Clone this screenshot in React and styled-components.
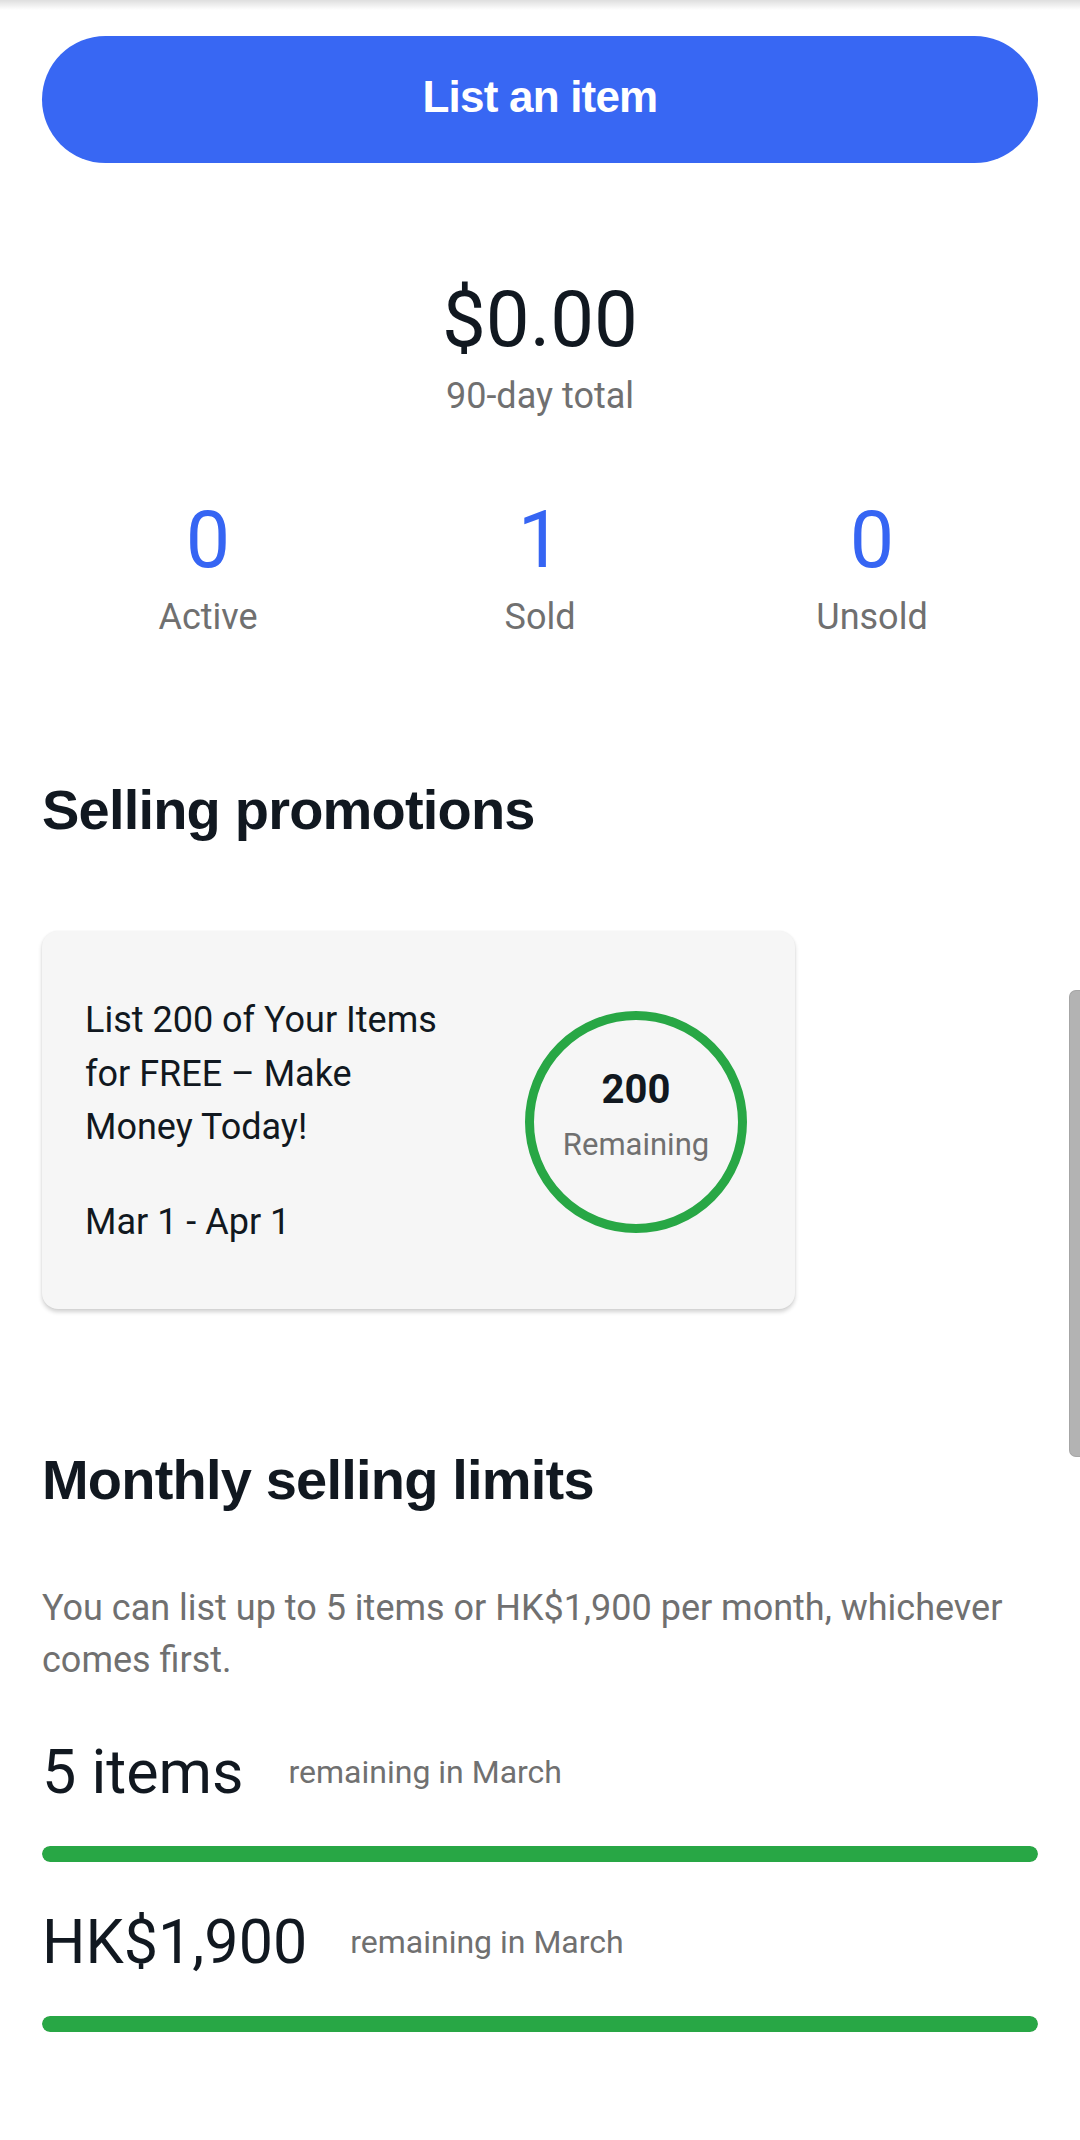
import React from "react";
import styled, { createGlobalStyle } from "styled-components";

const GlobalStyle = createGlobalStyle`
  html, body {
    margin: 0;
    padding: 0;
    background: #ffffff;
  }
  body {
    font-family: Roboto, "Noto Sans", Arial, sans-serif;
    color: #111820;
    -webkit-font-smoothing: antialiased;
  }
  * { box-sizing: border-box; }
`;

const Page = styled.div`
  position: relative;
  width: 1080px;
  min-height: 2140px;
  background: #ffffff;
  overflow: hidden;
`;

const TopShade = styled.div`
  height: 10px;
  background: linear-gradient(to bottom, rgba(0, 0, 0, 0.13), rgba(0, 0, 0, 0));
`;

const Content = styled.main`
  padding: 0 42px 80px;
  display: flex;
  flex-direction: column;
`;

const PrimaryButton = styled.button`
  margin-top: 26px;
  height: 127px;
  width: 100%;
  padding: 0 0 5px;
  border: none;
  border-radius: 64px;
  background: #3867f3;
  color: #ffffff;
  font-family: "Liberation Sans", Arial, sans-serif;
  font-weight: 700;
  font-size: 44px;
  letter-spacing: -0.8px;
  cursor: pointer;
`;

const Summary = styled.section`
  margin-top: 112px;
  display: flex;
  flex-direction: column;
  align-items: center;
`;

const Total = styled.div`
  font-size: 78px;
  line-height: 90px;
  color: #111820;
`;

const TotalLabel = styled.div`
  margin-top: 9px;
  font-size: 36px;
  line-height: 44px;
  color: #707070;
`;

const Stats = styled.section`
  margin-top: 77px;
  display: grid;
  grid-template-columns: repeat(3, 1fr);
`;

const Stat = styled.div`
  display: flex;
  flex-direction: column;
  align-items: center;
`;

const StatValue = styled.div`
  font-size: 79px;
  line-height: 90px;
  color: #3665f3;
`;

const StatLabel = styled.div`
  margin-top: 10px;
  font-size: 36px;
  line-height: 44px;
  color: #707070;
`;

const SectionTitle = styled.h2`
  margin: ${(p) => p.$top}px 0 0;
  font-family: "Liberation Sans", Arial, sans-serif;
  font-weight: 700;
  font-size: 56px;
  line-height: 64px;
  letter-spacing: -0.8px;
  color: #111820;
`;

const PromoCard = styled.div`
  margin-top: 89px;
  width: 753px;
  padding: 63px 48px 60px 43px;
  display: flex;
  align-items: center;
  justify-content: space-between;
  background: #f6f6f6;
  border-radius: 16px;
  box-shadow: 0 3px 4px rgba(0, 0, 0, 0.18), 0 0 2px rgba(0, 0, 0, 0.06);
`;

const PromoText = styled.div`
  width: 370px;
  display: flex;
  flex-direction: column;
`;

const PromoTitle = styled.div`
  font-size: 36px;
  line-height: 53.5px;
  color: #111820;
`;

const PromoDates = styled.div`
  margin-top: 41px;
  font-size: 36px;
  line-height: 53.5px;
  color: #111820;
`;

const Ring = styled.div`
  width: 222px;
  height: 222px;
  border-radius: 50%;
  border: 9px solid #28a745;
  display: flex;
  flex-direction: column;
  align-items: center;
  justify-content: center;
  padding-bottom: 10px;
`;

const RingCount = styled.div`
  font-size: 40px;
  line-height: 44px;
  font-weight: 700;
  color: #111820;
`;

const RingLabel = styled.div`
  margin-top: 13px;
  font-size: 31px;
  line-height: 40px;
  color: #707070;
`;

const Description = styled.p`
  margin: 70px 0 0;
  font-size: 36px;
  line-height: 52px;
  color: #707070;
`;

const LimitList = styled.div`
  margin-top: 50px;
  display: flex;
  flex-direction: column;
  gap: 44px;
`;

const LimitItem = styled.div`
  display: flex;
  flex-direction: column;
`;

const LimitRow = styled.div`
  display: flex;
  align-items: center;
  gap: ${(p) => p.$gap}px;
`;

const LimitValue = styled.div`
  font-size: 61px;
  line-height: 72px;
  color: #111820;
`;

const LimitNote = styled.div`
  font-size: 32px;
  line-height: 40px;
  color: #707070;
`;

const Bar = styled.div`
  margin-top: 38px;
  height: 16px;
  border-radius: 8px;
  background: #e5e5e5;
  overflow: hidden;
`;

const BarFill = styled.div`
  height: 100%;
  border-radius: 8px;
  background: #28a745;
`;

const Scrollbar = styled.div`
  position: absolute;
  top: 990px;
  right: 0;
  width: 11px;
  height: 467px;
  background: #b3b3b3;
  border: 1px solid #a6a6a6;
  border-right: none;
  border-radius: 7px 0 0 7px;
`;

const stats = [
  { value: 0, label: "Active" },
  { value: 1, label: "Sold" },
  { value: 0, label: "Unsold" },
];

const limits = [
  { value: "5 items", gap: 45, pct: 100 },
  { value: "HK$1,900", gap: 43, pct: 100 },
];

export default function App() {
  return (
    <>
      <GlobalStyle />
      <Page>
        <TopShade />
        <Content>
          <PrimaryButton>List an item</PrimaryButton>

          <Summary>
            <Total>$0.00</Total>
            <TotalLabel>90-day total</TotalLabel>
          </Summary>

          <Stats>
            {stats.map((s) => (
              <Stat key={s.label}>
                <StatValue>{s.value}</StatValue>
                <StatLabel>{s.label}</StatLabel>
              </Stat>
            ))}
          </Stats>

          <SectionTitle $top={139}>Selling promotions</SectionTitle>

          <PromoCard>
            <PromoText>
              <PromoTitle>List 200 of Your Items for FREE – Make Money Today!</PromoTitle>
              <PromoDates>Mar 1 - Apr 1</PromoDates>
            </PromoText>
            <Ring>
              <RingCount>200</RingCount>
              <RingLabel>Remaining</RingLabel>
            </Ring>
          </PromoCard>

          <SectionTitle $top={139}>Monthly selling limits</SectionTitle>

          <Description>
            You can list up to 5 items or HK$1,900 per month, whichever comes first.
          </Description>

          <LimitList>
            {limits.map((l) => (
              <LimitItem key={l.value}>
                <LimitRow $gap={l.gap}>
                  <LimitValue>{l.value}</LimitValue>
                  <LimitNote>remaining in March</LimitNote>
                </LimitRow>
                <Bar>
                  <BarFill style={{ width: `${l.pct}%` }} />
                </Bar>
              </LimitItem>
            ))}
          </LimitList>
        </Content>
        <Scrollbar />
      </Page>
    </>
  );
}
